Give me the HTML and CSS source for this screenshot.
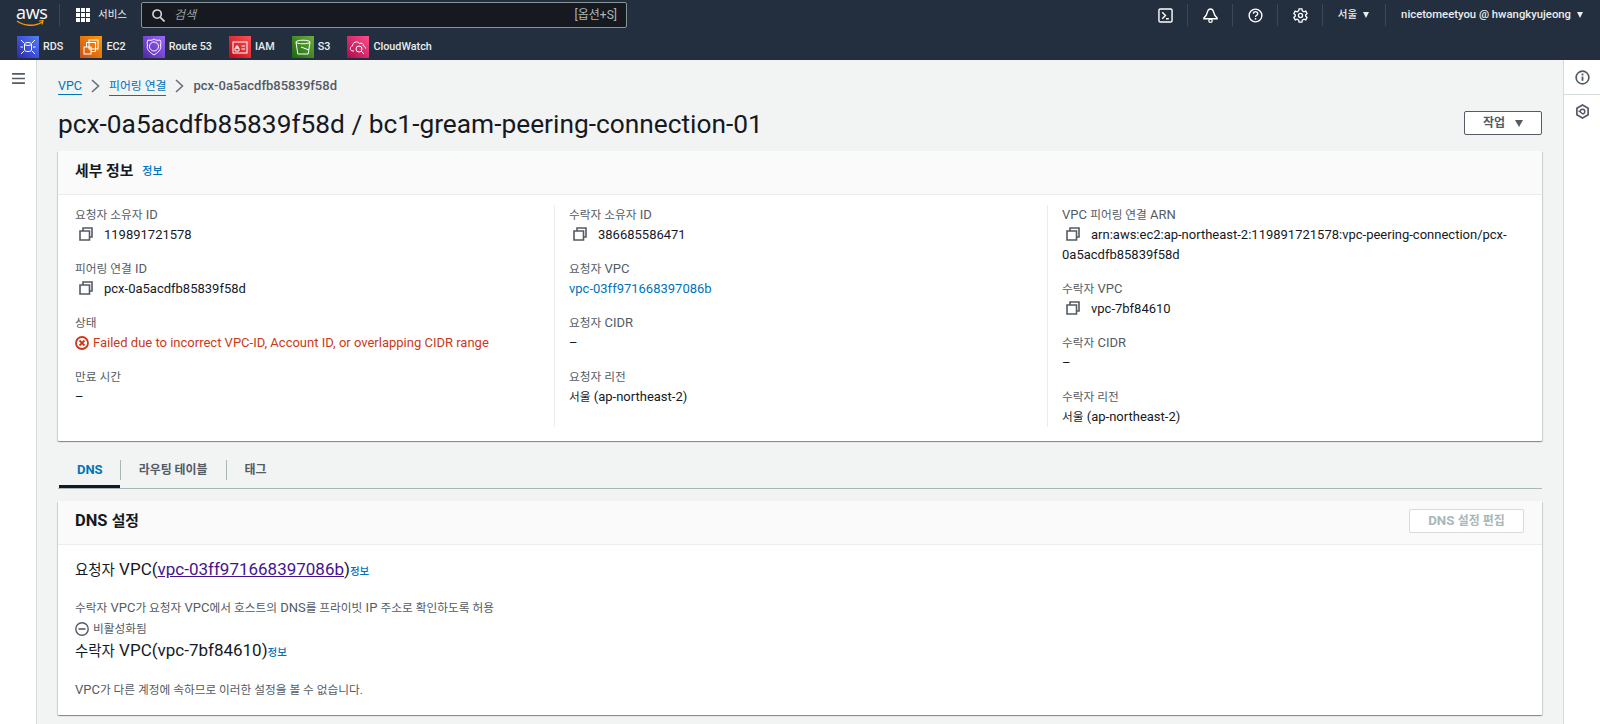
FILE: index.html
```html
<!DOCTYPE html>
<html lang="ko">
<head>
<meta charset="utf-8">
<title>VPC 피어링 연결</title>
<link rel="stylesheet" href="styles.css">
</head>
<body>
<svg class="defs" width="0" height="0" aria-hidden="true">
  <defs>
    <symbol id="copy" viewBox="0 0 14 14"><path d="M4 3.500V1h9v9h-2.500M1 4h9.500v9H1z" fill="none" stroke="#545b64" stroke-width="1.600"/></symbol>
    <symbol id="chev" viewBox="0 0 9 14"><path d="M1 1l6.500 6L1 13" fill="none" stroke="#687078" stroke-width="1.600"/></symbol>
  </defs>
</svg>
<header class="topbar">
  <div class="toprow">
    <a class="logo"><span class="logo-text">aws</span>
      <svg class="smile" viewBox="0 0 28 7"><path d="M1 1c7 5 18 6 25 1" fill="none" stroke="#f90" stroke-width="1.500"/><path d="M23 1l4-.5-1 4" fill="none" stroke="#f90" stroke-width="1.200"/></svg>
    </a>
    <span class="vsep first"></span>
    <svg class="grid-ic" viewBox="0 0 14 14" fill="#fff"><rect width="4" height="4"/><rect x="5" width="4" height="4"/><rect x="10" width="4" height="4"/><rect y="5" width="4" height="4"/><rect x="5" y="5" width="4" height="4"/><rect x="10" y="5" width="4" height="4"/><rect y="10" width="4" height="4"/><rect x="5" y="10" width="4" height="4"/><rect x="10" y="10" width="4" height="4"/></svg>
    <span class="svc">서비스</span>
    <div class="search">
      <svg class="search-ic" viewBox="0 0 14 14"><circle cx="5.500" cy="5.500" r="4.500" fill="none" stroke="#d5dbdb" stroke-width="1.700"/><path d="M9 9l4.500 4.500" stroke="#d5dbdb" stroke-width="1.800"/></svg>
      <span class="search-ph">검색</span>
      <span class="search-key">[옵션+S]</span>
    </div>
    <div class="util">
      <svg class="u-ic" viewBox="0 0 16 16"><rect x="1" y="1" width="14" height="14" rx="1.500" fill="none" stroke="#fff" stroke-width="1.500"/><path d="M4.500 4.500L8 8l-3.500 3.500M8.500 11.500h3" fill="none" stroke="#fff" stroke-width="1.500"/></svg>
      <span class="vsep"></span>
      <svg class="u-ic" viewBox="0 0 16 16"><path d="M8 1c-2 0-3 1.500-3.500 4C4 7.500 3 9 1 10.500v1h14v-1C13 9 12 7.500 11.500 5 11 2.500 10 1 8 1z" fill="none" stroke="#fff" stroke-width="1.500"/><circle cx="8" cy="13.500" r="1.800" fill="none" stroke="#fff" stroke-width="1.400"/></svg>
      <span class="vsep"></span>
      <svg class="u-ic" viewBox="0 0 16 16"><circle cx="8" cy="8" r="6.800" fill="none" stroke="#fff" stroke-width="1.500"/><path d="M5.700 6.200c0-3 4.700-3 4.700-.2 0 1.800-2.400 1.800-2.400 3.600" fill="none" stroke="#fff" stroke-width="1.400"/><rect x="7.200" y="10.800" width="1.600" height="1.600" fill="#fff"/></svg>
      <span class="vsep"></span>
      <svg class="u-ic" viewBox="0 0 16 16"><path d="M6.500 1h3l.4 2 1.700 1 2-.7 1.400 2.700-1.500 1.300v1.400l1.500 1.300-1.400 2.700-2-.7-1.700 1-.4 2h-3l-.4-2-1.700-1-2 .7L.9 10l1.500-1.300V7.300L.9 6l1.400-2.700 2 .7 1.700-1z" fill="none" stroke="#fff" stroke-width="1.400"/><circle cx="8" cy="8" r="2.200" fill="none" stroke="#fff" stroke-width="1.400"/></svg>
      <span class="vsep"></span>
      <span class="u-txt region">서울</span><span class="caret region-caret"></span>
      <span class="vsep"></span>
      <span class="u-txt user">nicetomeetyou @ hwangkyujeong</span><span class="caret"></span>
    </div>
  </div>
  <nav class="favs">
    <a class="fav rds"><span class="fav-ic"><svg viewBox="0 0 22 22" fill="none" stroke="#fff" stroke-width="1"><ellipse cx="11" cy="8" rx="3.500" ry="1.500"/><path d="M7.500 8v6c0 2 7 2 7 0V8M4 4l3 3M18 4l-3 3M4 18l3-3M18 18l-3-3M6 11H3.500M18.500 11H16"/></svg></span>RDS</a>
    <a class="fav ec2"><span class="fav-ic"><svg viewBox="0 0 22 22" fill="none" stroke="#fff" stroke-width="1"><rect x="9" y="4" width="9" height="9"/><path d="M6.500 11V6.500h9v9H11"/><rect x="4" y="11" width="7" height="7"/></svg></span>EC2</a>
    <a class="fav r53"><span class="fav-ic"><svg viewBox="0 0 22 22" fill="none" stroke="#fff" stroke-width="1"><path d="M11 3c2 1.500 4 1.500 6 1 1 2 1 3 .5 5 1 3 0 6-6.500 10-6.500-4-7.500-7-6.500-10-.5-2-.5-3 .5-5 2 .5 4 .5 6-1z"/><circle cx="11" cy="10.500" r="4.500"/></svg></span>Route 53</a>
    <a class="fav iam"><span class="fav-ic"><svg viewBox="0 0 22 22" fill="none" stroke="#fff" stroke-width="1"><rect x="4" y="6" width="14" height="11"/><path d="M6 15v-3h4v3zM7 12v-2h2v2zM12.500 10H16M12.500 13H16"/></svg></span>IAM</a>
    <a class="fav s3"><span class="fav-ic"><svg viewBox="0 0 22 22" fill="none" stroke="#fff" stroke-width="1"><ellipse cx="11" cy="6" rx="7" ry="1.800"/><path d="M4 6l1.800 12h10.400L18 6M9 11l8 3"/></svg></span>S3</a>
    <a class="fav cw"><span class="fav-ic"><svg viewBox="0 0 22 22" fill="none" stroke="#fff" stroke-width="1"><path d="M7 15H6c-3.500 0-3.500-4.500-.5-5 0-4 5-5.500 7-2.500 2-1 4 0 4 2.500 1.500.5 2 1.500 2 2.500"/><circle cx="12" cy="13" r="3"/><path d="M14 15l3 3"/></svg></span>CloudWatch</a>
  </nav>
</header>
<div class="shell">
  <aside class="rail-left">
    <svg class="burger" viewBox="0 0 14 12"><path d="M0 1h14M0 6h14M0 11h14" stroke="#545b64" stroke-width="1.800"/></svg>
  </aside>
  <main class="main">
    <nav class="crumbs">
      <a class="crumb">VPC</a>
      <svg class="chev"><use href="#chev"/></svg>
      <a class="crumb"><span class="ko">피어링 연결</span></a>
      <svg class="chev"><use href="#chev"/></svg>
      <span class="crumb-now">pcx-0a5acdfb85839f58d</span>
    </nav>
    <div class="page-head">
      <h1 class="title">pcx-0a5acdfb85839f58d / bc1-gream-peering-connection-01</h1>
      <button class="btn-action"><span class="btn-label">작업</span><span class="btn-caret"></span></button>
    </div>
    <section class="card">
      <div class="card-head">
        <h2 class="card-title"><span class="ko">세부 정보</span></h2>
        <a class="info">정보</a>
      </div>
      <div class="fields">
        <div class="col">
          <div class="field"><div class="label"><span class="ko">요청자 소유자</span> ID</div><div class="value"><svg class="copy"><use href="#copy"/></svg>119891721578</div></div>
          <div class="field"><div class="label"><span class="ko">피어링 연결</span> ID</div><div class="value"><svg class="copy"><use href="#copy"/></svg>pcx-0a5acdfb85839f58d</div></div>
          <div class="field"><div class="label"><span class="ko">상태</span></div><div class="value failed">
            <svg class="status-ic" viewBox="0 0 14 14"><circle cx="7" cy="7" r="6" fill="none" stroke="#ca3a18" stroke-width="1.800"/><path d="M4.500 4.500l5 5M9.500 4.500l-5 5" stroke="#ca3a18" stroke-width="1.800"/></svg>Failed due to incorrect VPC-ID, Account ID, or overlapping CIDR range</div></div>
          <div class="field"><div class="label"><span class="ko">만료 시간</span></div><div class="value">–</div></div>
        </div>
        <div class="col ruled">
          <div class="field"><div class="label"><span class="ko">수락자 소유자</span> ID</div><div class="value"><svg class="copy"><use href="#copy"/></svg>386685586471</div></div>
          <div class="field"><div class="label"><span class="ko">요청자</span> VPC</div><div class="value"><a class="link">vpc-03ff971668397086b</a></div></div>
          <div class="field"><div class="label"><span class="ko">요청자</span> CIDR</div><div class="value">–</div></div>
          <div class="field"><div class="label"><span class="ko">요청자 리전</span></div><div class="value"><span class="ko">서울</span> (ap-northeast-2)</div></div>
        </div>
        <div class="col ruled">
          <div class="field"><div class="label">VPC <span class="ko">피어링 연결</span> ARN</div><div class="value"><svg class="copy"><use href="#copy"/></svg>arn:aws:ec2:ap-northeast-2:119891721578:vpc-peering-connection/pcx-0a5acdfb85839f58d</div></div>
          <div class="field"><div class="label"><span class="ko">수락자</span> VPC</div><div class="value"><svg class="copy"><use href="#copy"/></svg>vpc-7bf84610</div></div>
          <div class="field"><div class="label"><span class="ko">수락자</span> CIDR</div><div class="value">–</div></div>
          <div class="field"><div class="label"><span class="ko">수락자 리전</span></div><div class="value"><span class="ko">서울</span> (ap-northeast-2)</div></div>
        </div>
      </div>
    </section>
    <div class="tabs">
      <a class="tab active">DNS</a>
      <a class="tab"><span class="ko">라우팅 테이블</span></a>
      <a class="tab"><span class="ko">태그</span></a>
    </div>
    <section class="card dns">
      <div class="card-head between">
        <h2 class="card-title">DNS <span class="ko">설정</span></h2>
        <button class="btn-disabled" disabled>DNS <span class="ko">설정 편집</span></button>
      </div>
      <div class="dns-body">
        <h3 class="sub"><span class="ko">요청자</span> VPC(<a class="visited">vpc-03ff971668397086b</a>)<a class="info tiny">정보</a></h3>
        <p class="label dns-note"><span class="ko">수락자</span> VPC<span class="ko">가 요청자</span> VPC<span class="ko">에서 호스트의</span> DNS<span class="ko">를 프라이빗</span> IP <span class="ko">주소로 확인하도록 허용</span></p>
        <p class="label off"><svg class="status-ic" viewBox="0 0 14 14"><circle cx="7" cy="7" r="6.200" fill="none" stroke="#545b64" stroke-width="1.400"/><path d="M3.500 7h7" stroke="#545b64" stroke-width="1.600"/></svg><span class="ko">비활성화됨</span></p>
        <h3 class="sub"><span class="ko">수락자</span> VPC(vpc-7bf84610)<a class="info tiny">정보</a></h3>
        <p class="label dns-foot">VPC<span class="ko">가 다른 계정에 속하므로 이러한 설정을 볼 수 없습니다.</span></p>
      </div>
    </section>
  </main>
  <aside class="rail-right">
    <div class="rr-slot top"><svg class="rr-ic" viewBox="0 0 16 16"><circle cx="8" cy="8" r="6.800" fill="none" stroke="#545b64" stroke-width="1.800"/><path d="M8 7v4.500" stroke="#545b64" stroke-width="2"/><rect x="7" y="3.800" width="2" height="2" fill="#545b64"/></svg></div>
    <div class="rr-slot"><svg class="rr-ic" viewBox="0 0 16 16"><path d="M8 1l6 3.500v7L8 15l-6-3.500v-7z" fill="none" stroke="#545b64" stroke-width="1.800"/><path d="M5.500 8a2.500 2.500 0 1 1 2.500 2.500L5 8z" fill="none" stroke="#545b64" stroke-width="1.600"/></svg></div>
  </aside>
</div>
</body>
</html>
```
FILE: styles.css
```css
* { box-sizing: border-box; }
html, body { margin: 0; height: 724px; overflow: hidden; }
body {
  display: flex;
  flex-direction: column;
  background: #f2f3f3;
  color: #16191f;
  font-family: Roboto, "Noto Sans CJK KR", sans-serif;
  font-size: 13px;
  line-height: 20px;
}
.defs { position: absolute; }
h1, h2, h3, p { margin: 0; }
.ko { font-size: .9em; }

/* top bar */
.topbar { flex: none; height: 60px; background: #232f3e; color: #fff; }
.toprow { display: flex; align-items: center; height: 30px; padding: 0 17px 0 16px; }
.logo { position: relative; width: 28px; height: 22px; flex: none; }
.logo-text { display: block; font: 18px/17px "Open Sans", sans-serif; letter-spacing: -.3px; color: #fff; }
.smile { position: absolute; left: 0; top: 16px; width: 28px; height: 7px; }
.vsep { flex: none; width: 1px; height: 22px; background: #3b4756; }
.vsep.first { margin: 0 16px 0 15px; }
.grid-ic { flex: none; width: 14px; height: 14px; }
.svc { margin-left: 8px; width: 43px; font-size: 10.500px; color: #eaeded; }
.search {
  display: flex; align-items: center; flex: none;
  width: 486px; height: 26px;
  border: 1px solid #879596; border-radius: 2px;
  background: #16191f; padding: 0 9px 0 10px;
}
.search-ic { width: 13px; height: 13px; }
.search-ph { margin-left: 9px; font-size: 12px; font-style: italic; color: #95a5a6; }
.search-key { margin-left: auto; font-size: 12px; color: #aab7b8; }
.util { display: flex; align-items: center; margin-left: auto; }
.u-ic { flex: none; width: 15px; height: 15px; }
.util .vsep { margin: 0 15px; }
.util .u-ic + .vsep { margin: 0 14.500px; }
.u-txt { font-size: 11.300px; color: #eaeded; font-weight: 500; }
.region { font-size: 10.500px; }
.caret { width: 0; height: 0; margin-left: 6px; border: 3.500px solid transparent; border-top: 6px solid #eaeded; border-bottom: 0; }
.region-caret { margin-right: 1px; }
.favs { display: flex; align-items: center; height: 30px; padding: 4px 0 0 17px; }
.fav { display: flex; align-items: center; margin-right: 17px; font-size: 10.800px; font-weight: 500; color: #eaeded; }
.fav-ic { flex: none; width: 22px; height: 22px; margin-right: 4px; }
.fav-ic svg { display: block; width: 22px; height: 22px; }
.rds .fav-ic { background: linear-gradient(45deg, #2e27ad, #527fff); }
.ec2 .fav-ic { background: linear-gradient(45deg, #c8511b, #f90); }
.r53 .fav-ic { background: linear-gradient(45deg, #4d27a8, #a166ff); }
.iam .fav-ic { background: linear-gradient(45deg, #bd0816, #ff5252); }
.s3 .fav-ic { background: linear-gradient(45deg, #1b660f, #6cae3e); }
.cw .fav-ic { background: linear-gradient(45deg, #b0084d, #ff4f8b); }

/* shell */
.shell { flex: 1; display: flex; min-height: 0; }
.rail-left { flex: none; width: 37px; background: #fff; border-right: 1px solid #d5dbdb; }
.burger { display: block; width: 13px; height: 11px; margin: 13px 0 0 12px; }
.rail-right { flex: none; width: 37px; background: #fff; border-left: 1px solid #d5dbdb; }
.rr-slot { height: 34px; display: flex; justify-content: center; padding-top: 9px; }
.rr-slot.top { border-bottom: 1px solid #d5dbdb; height: 35px; padding-top: 10px; }
.rr-ic { width: 15px; height: 15px; }
.main { flex: 1; min-width: 0; padding: 16px 21px 0; }

/* breadcrumbs */
.crumbs { display: flex; align-items: center; height: 20px; }
.crumb { color: #0073bb; border-bottom: 1px solid #0073bb; line-height: 17px; font-size: 12.500px; }
.crumb .ko { font-size: .95em; }
.chev { width: 9px; height: 14px; margin: 0 9px; }
.crumb-now { font-weight: 500; color: #545b64; font-size: 13px; }

/* page head */
.page-head { display: flex; align-items: center; justify-content: space-between; height: 24px; margin-top: 15px; }
.title { font-size: 26.300px; line-height: 30px; font-weight: 400; margin-top: 2px; }
.btn-action {
  display: flex; align-items: center; justify-content: center;
  width: 78px; height: 24px; padding: 0;
  background: #fff; border: 1px solid #545b64; border-radius: 2px;
  font: inherit; font-weight: 600; color: #545b64;
}
.btn-label { font-size: 12px; }
.btn-caret { margin-left: 10px; border: 4.500px solid transparent; border-top: 7px solid #545b64; border-bottom: 0; }

/* cards */
.card {
  margin-top: 16px; height: 290px;
  background: #fff; border-radius: 1px;
  box-shadow: 0 1px 1px 0 rgba(0, 28, 36, .3), 1px 1px 1px 0 rgba(0, 28, 36, .15), -1px 1px 1px 0 rgba(0, 28, 36, .15);
}
.card-head {
  display: flex; align-items: center; height: 44px; padding: 0 18px 4px 17px;
  background: #fafafa; border-bottom: 1px solid #eaeded;
}
.between { justify-content: space-between; }
.card-title { font-size: 16.500px; font-weight: 700; }
.info { margin: 3px 0 0 9px; font-size: 11px; font-weight: 500; color: #0073bb; }
.fields { display: grid; grid-template-columns: 479px 493px 1fr; padding: 10px 17px 0; }
.col.ruled { border-left: 1px solid #eaeded; padding-left: 14px; height: 222px; }
.field { margin-bottom: 14px; }
.label { color: #545b64; }
.value { color: #16191f; }
.copy { width: 14px; height: 14px; margin: 0 11px 0 4px; vertical-align: -2px; }
.status-ic { width: 14px; height: 14px; margin-right: 4px; vertical-align: -3px; }
.value.failed { color: #ca3a18; }
.link { color: #0073bb; }

/* tabs */
.tabs { display: flex; align-items: stretch; height: 48px; padding: 19px 0 8px 1px; border-bottom: 1px solid #aab7b8; position: relative; }
.tab { position: relative; display: block; padding: 0 18px; font-weight: 500; color: #545b64; border-left: 1px solid #aab7b8; }
.tab .ko { font-weight: 700; font-size: .92em; }
.tab.active { border-left: 0; color: #0073bb; font-weight: 700; padding-right: 17px; }
.tab.active::after { content: ""; position: absolute; left: 0; right: 0; bottom: -8px; height: 3px; background: #16191f; }

/* dns */
.card.dns { margin-top: 12px; height: 214px; }
.btn-disabled {
  width: 115px; height: 24px; padding: 0;
  background: #fff; border: 1px solid #d5dbdb; border-radius: 2px;
  font: inherit; font-size: 13.300px; font-weight: 700; color: #aab7b8;
}
.dns-body { padding: 12px 17px 0; }
.sub { font-size: 17px; line-height: 24px; font-weight: 400; }
.sub .ko { font-size: .85em; }
.visited { color: #44148f; text-decoration: underline; }
.info.tiny { margin: 0; font-size: 10.500px; }
.dns-note { margin-top: 14px; }
.off { line-height: 21px; margin-bottom: -2px; }
.dns-foot { margin-top: 15px; }
```
